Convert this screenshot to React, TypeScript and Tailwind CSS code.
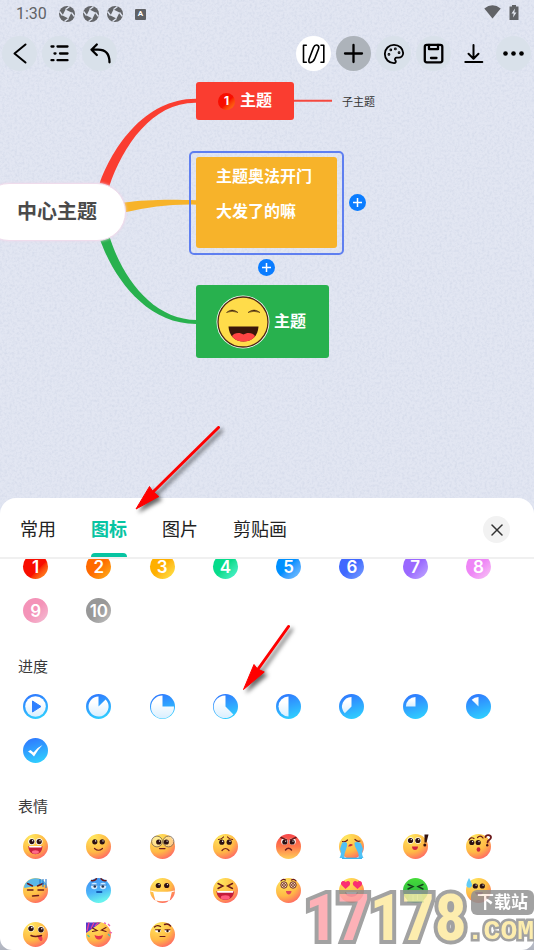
import { useState } from 'react'
import type { ReactNode } from 'react'
import { Palette, X } from 'lucide-react'

const tabs = ['常用', '图标', '图片', '剪贴画']

const numbers = [
  { label: '1', bg: 'bg-linear-135 from-[#f80d00] from-60% to-[#ff9a2a]' },
  { label: '2', bg: 'bg-linear-135 from-[#ff6a00] from-50% to-[#ffb31a]' },
  { label: '3', bg: 'bg-linear-135 from-[#ffb000] from-50% to-[#ffe94a]' },
  { label: '4', bg: 'bg-linear-135 from-[#06dc8b] from-50% to-[#4ff5d6]' },
  { label: '5', bg: 'bg-linear-135 from-[#0090ff] from-50% to-[#7cc4ff]' },
  { label: '6', bg: 'bg-linear-135 from-[#4068ff] from-50% to-[#7fa0ff]' },
  { label: '7', bg: 'bg-linear-135 from-[#9a68ff] from-50% to-[#c3aaff]' },
  { label: '8', bg: 'bg-linear-135 from-[#ee86f6] from-50% to-[#f8c6f4]' },
  { label: '9', bg: 'bg-linear-135 from-[#f493b8] from-50% to-[#f3c0d6]' },
  { label: '10', bg: 'bg-linear-135 from-[#989898] from-50% to-[#c2c2c2]' },
]

// white sector left on the blue disc
const progress = [
  { name: '12%', d: 'M12.5 12.5L19.6 5.4A10 10 0 1 1 12.5 2.5Z' },
  { name: '25%', d: 'M12.5 12.5H24A11.5 11.5 0 1 1 12.5 1.5Z' },
  { name: '37%', d: 'M12.5 12.5L20.4 20.4A11.3 11.3 0 1 1 12.5 1.5Z' },
  { name: '50%', d: 'M12.5 2.5V22.5A10 10 0 0 1 12.5 2.5Z' },
  { name: '62%', d: 'M12.5 12.5L5.8 19.2A9.6 9.6 0 0 1 12.5 2.9Z' },
  { name: '75%', d: 'M12.5 12.5H2.9A9.6 9.6 0 0 1 12.5 2.9Z' },
  { name: '87%', d: 'M12.5 12.5L5.7 5.7A9.6 9.6 0 0 1 12.5 2.9Z' },
]

function Eyes({ x = 12.5, y = 8, gap = 3.7 }: { x?: number; y?: number; gap?: number }) {
  return (
    <>
      {[x - gap, x + gap].map(cx => (
        <g key={cx}>
          <circle cx={cx} cy={y} r="2.6" fill="#2b1012" />
          <circle cx={cx + 0.8} cy={y - 0.9} r="0.7" fill="#fff" />
        </g>
      ))}
    </>
  )
}

const line = { fill: 'none', stroke: '#6b1a1c', strokeWidth: 1.2, strokeLinecap: 'round' as const }

const emojis: { name: string; face?: string; art: ReactNode }[] = [
  {
    name: '大笑',
    art: (
      <>
        <circle cx="8.6" cy="7.6" r="3.4" fill="#fff" />
        <circle cx="16.2" cy="7.6" r="3.4" fill="#fff" />
        <Eyes x={12.5} y={7.6} />
        <path d="M5.4 12H19.4C19.4 17.5 16.5 20.2 12.4 20.2S5.4 17.5 5.4 12Z" fill="#c81e3c" />
        <path d="M6 12H18.8L18.4 13.6H6.4Z" fill="#fff" />
        <ellipse cx="12.4" cy="18" rx="3.5" ry="1.8" fill="#ff6a88" />
      </>
    ),
  },
  {
    name: '微笑',
    art: (
      <>
        <Eyes y={7.8} />
        <path d="M8.5 14.5Q12.5 18 16.5 14.5" {...line} />
      </>
    ),
  },
  {
    name: '眼镜',
    art: (
      <>
        <circle cx="7" cy="7.5" r="5.4" fill="#fff" fillOpacity=".35" stroke="#75604a" strokeWidth=".8" />
        <circle cx="18.5" cy="7.5" r="5.4" fill="#fff" fillOpacity=".35" stroke="#75604a" strokeWidth=".8" />
        <Eyes y={8} gap={3.8} />
        <path d="M9.5 14.6H15" {...line} />
      </>
    ),
  },
  {
    name: '难过',
    art: (
      <>
        <Eyes y={8.2} />
        <path d="M5.5 5.5Q8.5 5.5 10.5 3M19.5 5.5Q16.5 5.5 14.5 3M9 16.5Q12.5 12.5 16 16.5" {...line} />
      </>
    ),
  },
  {
    name: '愤怒',
    face: 'url(#face-red)',
    art: (
      <>
        <circle cx="8.5" cy="7.5" r="3.3" fill="#fff" />
        <circle cx="16.5" cy="7.5" r="3.3" fill="#fff" />
        <Eyes y={8} />
        <path d="M5 3.5L10.8 6M20 3.5L14.2 6M9.5 16Q12.5 12.5 15.5 16" {...line} strokeWidth={1.5} />
      </>
    ),
  },
  {
    name: '大哭',
    art: (
      <>
        <path d="M3.5 7.5Q6 8.5 8.5 6M21 7Q18.500 8 16 5.5" {...line} />
        <path d="M3 9Q5.5 7 8 9C9 14 4.5 18 5.5 24H.5Q3 20 1 15Z" fill="#4fc1f5" />
        <path d="M15.5 8.5Q19.5 7 22 9.5L24 15Q22 20 24.5 24H19.5C21 18 15 14 15.5 8.5Z" fill="#4fc1f5" />
        <path d="M9 12.5Q11 8.5 14 11Q12 12.5 9 12.5Z" fill="#c4253c" />
        <path d="M3 24.3H23" stroke="#38b6f1" strokeWidth="1.4" />
      </>
    ),
  },
  {
    name: '惊讶',
    art: (
      <>
        <circle cx="7.5" cy="6.5" r="3.2" fill="#fff" />
        <circle cx="15" cy="6.5" r="3.2" fill="#fff" />
        <Eyes x={11.2} y={6.5} />
        <path d="M9 12.5H15C15 17.2 9 17.2 9 12.5Z" fill="#d3243f" />
        <path d="M21.500 .5H25.5L23.5 8.5H21.5Z" fill="#33120f" />
        <circle cx="21.8" cy="11" r="1.5" fill="#33120f" />
      </>
    ),
  },
  {
    name: '疑问',
    art: (
      <>
        <Eyes x={9} y={8.5} gap={3.2} />
        <path d="M3 6Q5 2.5 8 4.5M11.5 3.5Q14.5 .5 17 4" {...line} />
        <ellipse cx="12.5" cy="15.5" rx="1.9" ry="2.2" fill="#c4253c" />
        <path d="M19.5 3C20 .5 25 .5 25 3.5C25 6 21.5 5.5 21.5 8.5" {...line} strokeWidth={1.8} />
        <circle cx="21.2" cy="11.2" r="1.2" fill="#4b1513" />
      </>
    ),
  },
  {
    name: '无语',
    art: (
      <>
        <path d="M1.2 8A12.5 12.5 0 0 1 23.5 6.5Q12 8 1.2 10Z" fill="#59b8ea" />
        <path d="M4.5 5.5L9.5 8M20 5.5L14.5 8M4.5 12H10M15 12H20.5M9.5 18L15.5 17.5" {...line} strokeWidth={1.4} />
        <path d="M17 1V6M20 1V9M23 1V10" stroke="#2378d2" strokeWidth="1.1" />
      </>
    ),
  },
  {
    name: '沮丧',
    face: 'url(#face-blue)',
    art: (
      <>
        <path d="M5.5 2.5Q8 3.5 10.5 .8M20 2.5Q17.5 3.5 15 .8" {...line} strokeWidth={1.5} />
        <circle cx="8.2" cy="8" r="3.2" fill="#d5ecff" />
        <circle cx="17" cy="8" r="3.2" fill="#d5ecff" />
        <path d="M4.5 7H11.5M13.5 7H20.5" stroke="#1872cb" strokeWidth="1.2" />
        <circle cx="8.8" cy="8.5" r="1.3" fill="#28334f" />
        <circle cx="16.8" cy="8.5" r="1.3" fill="#28334f" />
        <path d="M11 14H15.5" stroke="#145fb7" strokeWidth="1.8" strokeLinecap="round" />
      </>
    ),
  },
  {
    name: '口罩',
    art: (
      <>
        <Eyes y={7.5} gap={4.2} />
        <path d="M3 13.2Q12.5 14.5 22 13.2L19.8 22.3Q12.5 24 5.2 22.3Z" fill="#fff" />
        <path d="M.3 13L3.5 13.6M24.7 13L21.500 13.6M5.5 21.800L7 24M19.5 21.8L18 24" stroke="#fff" strokeWidth="1" />
      </>
    ),
  },
  {
    name: '爆笑',
    art: (
      <>
        <path d="M5 5.5L10 8L5 10.5M19.5 5.5L14.5 8L19.5 10.5" {...line} strokeWidth={1.4} />
        <path d="M3.5 13H21C21 18.5 17 22 12.3 22S3.5 18.5 3.5 13Z" fill="#c31b3a" />
        <path d="M4 13H20.5L20 14.7H4.5Z" fill="#fff" />
        <ellipse cx="12.3" cy="19.5" rx="4.5" ry="2.2" fill="#ff5b7c" />
      </>
    ),
  },
  {
    name: '眩晕',
    art: (
      <>
        {[8, 17].map(cx => (
          <g key={cx}>
            <circle cx={cx} cy="7" r="3.2" fill="#fbe3c0" stroke="#6d2a22" strokeWidth="1" />
            <circle cx={cx} cy="7" r="1.4" fill="none" stroke="#6d2a22" strokeWidth="1" />
          </g>
        ))}
        <path d="M5 2.8Q7 .5 9.5 2M20 2.8Q18 .5 15.5 2" {...line} />
        <path d="M10 13H15.500C15.5 17.5 10 17.5 10 13Z" fill="#e1435a" />
      </>
    ),
  },
  {
    name: '爱心',
    art: (
      <>
        <path d="M6.5 11L2.5 7C.5 4 4.5 1.5 6.8 4C9.5 1.5 12.5 4.5 10.5 7.5Z" fill="#fb2f72" />
        <path d="M18.5 11L14.5 7.5C12.5 4.5 16 1.5 18.3 4C21 1.5 24.5 4.5 22.5 7.5Z" fill="#fb2f72" />
        <path d="M6 14H19C18 20.5 7 20.5 6 14Z" fill="#ac2024" />
        <path d="M7 14H18L17 16H8Z" fill="#fff" />
      </>
    ),
  },
  {
    name: '呕吐',
    face: 'url(#face-green)',
    art: (
      <>
        <path d="M5 6.5L10 8.5L5 11M20 6.5L15 8.5L20 11" {...line} stroke="#163f1d" strokeWidth={1.4} />
        <path d="M7 14Q12.5 12 18 14L21 24.5H4Z" fill="#22c08b" />
        <path d="M10 17V23M14.5 16.5V22" stroke="#6cebc0" strokeWidth="1" />
      </>
    ),
  },
  {
    name: '流汗',
    art: (
      <>
        <Eyes x={12.8} y={8} gap={3.5} />
        <path d="M9 14H17C16.5 18.5 9.5 18.5 9 14Z" fill="#b92032" />
        <path d="M3 0Q.2 5 .5 7.5A2.8 2.8 0 0 0 6 7.5Q6 5 3 0Z" fill="#63ccf6" />
      </>
    ),
  },
  {
    name: '鬼脸',
    art: (
      <>
        <circle cx="8" cy="6.5" r="3.2" fill="#fff" />
        <circle cx="18" cy="7.5" r="3.2" fill="#fff" />
        <circle cx="8" cy="6.6" r="2.7" fill="#2b1012" />
        <circle cx="18" cy="7.8" r="2.7" fill="#2b1012" />
        <circle cx="8.800" cy="5.6" r=".8" fill="#fff" />
        <circle cx="18.8" cy="6.8" r=".8" fill="#fff" />
        <path d="M14 13.5L18.5 14C20.5 17 19 19.5 17.5 19Q15.500 17.5 14 13.5Z" fill="#ee3e55" />
        <path d="M8 13.5Q12 15.5 18.5 13.5" {...line} strokeWidth={1.5} />
      </>
    ),
  },
  {
    name: '派对',
    art: (
      <>
        <path d="M0 .5H15L0 11Z" fill="#5438c8" />
        <path d="M3 .5L1 9M8 .5L5 6.5M12.5 .5L9 4" stroke="#e9409a" strokeWidth="1.3" />
        <path d="M6.5 6L11 8.5L6.5 9.5M20 5.5L15.5 8L20 9.5" {...line} />
        <path d="M8.5 13Q12.5 15 17 13Q16 17.8 12.7 17.5Q9.5 17.5 8.5 13Z" fill="#e5354f" />
        <path d="M22 2L24 4M23.5 10L26 11M18 .8L20 1.5" stroke="#ec58b0" strokeWidth="1.3" />
        <path d="M1.5 13L3.5 15M22 12L24 14" stroke="#45c8b1" strokeWidth="1.3" />
      </>
    ),
  },
  {
    name: '怀疑',
    art: (
      <>
        <path d="M4.5 5Q7 2.5 10.5 4.5M14.5 2.5Q18 .8 20.5 4" {...line} strokeWidth={1.4} />
        <path d="M5 8H11A3 2.5 0 0 1 5 8ZM14.5 8H20.5A3 2.5 0 0 1 14.5 8Z" fill="#fff" />
        <path d="M5.500 7.8H10.5M15 7.8H20M10 14.5H15" {...line} strokeWidth={1} />
        <circle cx="9" cy="9" r="1.2" fill="#2b1012" />
        <circle cx="17.5" cy="9" r="1.2" fill="#2b1012" />
      </>
    ),
  },
]

function Defs() {
  return (
    <svg className="absolute size-0" aria-hidden="true">
      <defs>
        <radialGradient id="face" cx=".3" cy=".15" r=".95">
          <stop offset="0" stopColor="#ffe75e" />
          <stop offset=".6" stopColor="#ffba45" />
          <stop offset="1" stopColor="#ff6068" />
        </radialGradient>
        <linearGradient id="face-red" x1="0" y1="0" x2="0" y2="1">
          <stop offset="0" stopColor="#f8464b" />
          <stop offset=".5" stopColor="#ff784b" />
          <stop offset="1" stopColor="#ffcf5a" />
        </linearGradient>
        <linearGradient id="face-blue" x1="0" y1="0" x2=".3" y2="1">
          <stop offset="0" stopColor="#3f8ef2" />
          <stop offset=".6" stopColor="#4cb4fa" />
          <stop offset="1" stopColor="#68f2ee" />
        </linearGradient>
        <linearGradient id="face-green" x1="0" y1="0" x2="0" y2="1">
          <stop offset="0" stopColor="#46dc39" />
          <stop offset="1" stopColor="#1faa45" />
        </linearGradient>
        <linearGradient id="disc" x1=".3" y1="0" x2=".6" y2="1">
          <stop offset="0" stopColor="#2f78ff" />
          <stop offset="1" stopColor="#2fcfff" />
        </linearGradient>
        <linearGradient id="pale" x1="0" y1="0" x2="0" y2="1">
          <stop offset=".3" stopColor="#fff" />
          <stop offset="1" stopColor="#d9efff" />
        </linearGradient>
      </defs>
    </svg>
  )
}

function PaperTexture() {
  return (
    <svg className="pointer-events-none absolute inset-0 size-full" aria-hidden="true">
      <filter id="grain" x="0" y="0" width="100%" height="100%">
        <feTurbulence type="fractalNoise" baseFrequency=".4" numOctaves="3" seed="4" />
        <feColorMatrix values="0 0 0 0 .6  0 0 0 0 .65  0 0 0 0 .78  2 0 0 0 -.8" />
      </filter>
      <rect width="100%" height="100%" filter="url(#grain)" opacity=".55" />
    </svg>
  )
}

function Wheel() {
  return (
    <svg viewBox="0 0 16 16" className="size-4">
      <circle cx="8" cy="8" r="8" fill="#636569" />
      <path d="M6.500 3.5L12.5 6.5L9.5 12.5L3.500 9.5Z" fill="#dfe4f0" />
      <path d="M6.5 3.5L10.500 .5M12.5 6.5L15.5 10.5M9.5 12.5L5.5 15.5M3.5 9.5L.5 5.5" stroke="#dfe4f0" strokeWidth="1.4" />
    </svg>
  )
}

function StatusBar() {
  return (
    <div className="flex h-7 items-center justify-between pl-4 pr-[15px] text-[#606266]">
      <div className="flex items-center gap-2">
        <span className="mr-1 font-[Roboto,sans-serif] text-base leading-7">1:30</span>
        <Wheel />
        <Wheel />
        <Wheel />
        <span className="ml-1 flex size-[11px] items-center justify-center rounded-[1px] bg-[#5f6165] font-[Roboto,sans-serif] text-[8px] font-bold text-white">
          A
        </span>
      </div>
      <div className="flex items-center gap-2 pb-1">
        <svg viewBox="0 0 17 14" className="h-3.5 w-[17px]">
          <path d="M.3 3.5Q8.5-3 16.7 3.5L8.5 13.5Z" fill="currentColor" />
        </svg>
        <svg viewBox="0 0 10 15" className="h-[15px] w-2.5">
          <path d="M3 0H7V1.5H9.5V15H.5V1.5H3Z" fill="currentColor" />
          <path d="M6 3.5L2.5 8.5H4.7L4 12.5L7.5 7.5H5.3Z" fill="#e4e8f1" />
        </svg>
      </div>
    </div>
  )
}

function ToolButton({ label, tone = 'bg-[#d9e1ea]', children }: { label: string; tone?: string; children: ReactNode }) {
  return (
    <button type="button" aria-label={label} className={`flex size-[35px] items-center justify-center rounded-full text-black ${tone}`}>
      {children}
    </button>
  )
}

function Glyph({ children, width = 2 }: { children: ReactNode; width?: number }) {
  return (
    <svg
      viewBox="0 0 35 35"
      className="size-[35px]"
      fill="none"
      stroke="currentColor"
      strokeWidth={width}
      strokeLinecap="round"
      strokeLinejoin="round"
    >
      {children}
    </svg>
  )
}

function Toolbar() {
  return (
    <div className="flex justify-between pl-0.5 pr-[3px] pt-2">
      <div className="flex gap-[5px]">
        <ToolButton label="返回">
          <Glyph>
            <path d="M23.5 8.5L12.5 17.5L23.5 26.5" />
          </Glyph>
        </ToolButton>
        <ToolButton label="大纲">
          <Glyph width={2.3}>
            <path d="M9.5 10.5H11.5M15.5 10.5H25.5M12.5 17.5H13.5M18 17.5H25.5M9.5 24.2H11.5M15.5 24.2H25.5" />
          </Glyph>
        </ToolButton>
        <ToolButton label="撤销">
          <Glyph width={2.3}>
            <path d="M14.8 8.5L9.5 13.7L14.8 19M9.5 13.7H16C24 13.7 27.5 18 27.5 26.3" />
          </Glyph>
        </ToolButton>
      </div>
      <div className="flex gap-[5px]">
        <ToolButton label="手写" tone="bg-white">
          <Glyph width={1.6}>
            <path d="M10.3 9.2H7.5V26.3H10.3M25 9.2H27.8V26.3H25" />
            <path d="M17.5 11.5C18.3 9.5 20 8.8 21.5 9.2C23 9.8 23 11.5 22.5 13L18.8 22.5C17.8 25 16 26.5 14 26.8C12.6 26.5 12.6 24.5 13.2 22.8Z" />
          </Glyph>
        </ToolButton>
        <ToolButton label="添加" tone="bg-[#adb3ba]">
          <Glyph width={2.3}>
            <path d="M17.5 9V26M9 17.5H26" />
          </Glyph>
        </ToolButton>
        <ToolButton label="样式">
          <Palette size={22} strokeWidth={2} />
        </ToolButton>
        <ToolButton label="保存">
          <Glyph width={2.3}>
            <rect x="8.8" y="8.8" width="17.5" height="17.5" rx="2" />
            <path d="M13 9V13.2H22V9M15 22H20.5" />
          </Glyph>
        </ToolButton>
        <ToolButton label="下载" tone="bg-transparent">
          <Glyph>
            <path d="M17.5 9V22.5M12.5 17.8L17.5 22.8L22.5 17.8M9.3 26H26.3" />
          </Glyph>
        </ToolButton>
        <ToolButton label="更多">
          <svg viewBox="0 0 35 35" className="size-[35px]" fill="currentColor">
            <circle cx="9.5" cy="17.5" r="2.3" />
            <circle cx="17.5" cy="17.5" r="2.3" />
            <circle cx="25.5" cy="17.5" r="2.3" />
          </svg>
        </ToolButton>
      </div>
    </div>
  )
}

function AddNode({ label, place }: { label: string; place: string }) {
  return (
    <button type="button" aria-label={label} className={`absolute size-[17px] rounded-full bg-[#0a7cff] ${place}`}>
      <svg viewBox="0 0 17 17" className="size-[17px]" stroke="#fff" strokeWidth="1.5">
        <path d="M8.5 4V13M4 8.5H13" />
      </svg>
    </button>
  )
}

function GrinFace() {
  return (
    <svg viewBox="0 0 54 54" className="size-[54px]">
      <circle cx="27" cy="27" r="26.5" fill="#fff" />
      <circle cx="27" cy="27" r="25" fill="#ffdc4a" stroke="#4d2a12" strokeWidth="1.3" />
      <path d="M10.5 17.5Q16 12.5 22 17.5Q16 15 10.5 17.5ZM32 17.5Q38 12.5 44 17.5Q38 15 32 17.5Z" fill="#3d1f0e" stroke="#3d1f0e" strokeWidth=".5" />
      <path d="M12.5 31.5H42.5C42 41 36 46.5 27.5 46.5S13 41 12.5 31.5Z" fill="#3a160a" />
      <path d="M16 41C18 37.5 24 37 27.5 39.5C31 37 37 37.5 39 41C36.5 45 32.5 46.5 27.5 46.5S18.500 45 16 41Z" fill="#ff4543" />
    </svg>
  )
}

function MindMap() {
  return (
    <main className="relative min-h-[427px] flex-1 overflow-hidden">
      <svg className="absolute left-0 top-0 h-72 w-[340px]" viewBox="0 71 340 288" aria-hidden="true">
        <path d="M99.5 184C112 148 145 98 197 98.800L197 102.7C153 101.5 123 145 109 187Z" fill="#fa3d30" />
        <path d="M124 202.5C145 200 165 199 197 200.3V204.7C170 204 150 207 124 212.5Z" fill="#f7b32a" />
        <path d="M99.5 238C112 275 145 324.500 197 324V320C153 320 122 278 109 235Z" fill="#28b14e" />
        <path d="M293 100.8H332" stroke="#f5483f" strokeWidth="2" />
      </svg>

      <div className="absolute -left-5 top-28 flex h-[58px] w-[146px] items-center rounded-full border border-[#efdcec] bg-white pl-9 text-xl font-bold text-[#4a4a4a] shadow-[0_0_3px_#ecd8ea]">
        中心主题
      </div>

      <div className="absolute left-[196px] top-[11px] flex h-[38px] w-[98px] items-center gap-[5px] rounded-[3px] bg-[#fa3d30] pl-[22px] text-base font-bold text-white">
        <span className="flex size-[17px] items-center justify-center rounded-full bg-linear-135 from-[#f80d00] from-55% to-[#ff7a1a] font-[Inter,sans-serif] text-xs">
          1
        </span>
        主题
      </div>
      <div className="absolute left-[342px] top-[22px] text-[11px] leading-[18px] text-[#333]">子主题</div>

      <div className="absolute left-[189px] top-20 rounded-[5px] border-2 border-[#5f7ff0] p-[5px] pt-1">
        <p className="h-[91px] w-[141px] whitespace-pre-line rounded-[3px] bg-[#f7b32a] pl-5 pt-0.5 text-base leading-[35px] font-bold text-white">
          {'主题奥法开门\n大发了的嘛'}
        </p>
      </div>
      <AddNode label="添加子主题" place="left-[349px] top-[123px]" />
      <AddNode label="添加同级主题" place="left-[258px] top-[188px]" />

      <div className="absolute left-[196px] top-[214px] flex h-[73px] w-[133px] items-center gap-1 rounded-[3px] bg-[#28b14e] pl-5 text-base font-bold text-white">
        <GrinFace />
        主题
      </div>
    </main>
  )
}

function IconGrid({ children }: { children: ReactNode }) {
  return <div className="grid grid-cols-8 justify-items-center gap-y-[19px] pl-1 pr-6">{children}</div>
}

function IconButton({ label, children }: { label: string; children: ReactNode }) {
  return (
    <button type="button" aria-label={label} className="size-[25px]">
      {children}
    </button>
  )
}

function SectionTitle({ children }: { children: ReactNode }) {
  return <h2 className="pb-[15px] pl-[18px] pt-8 text-[15px] leading-6 text-[#3a3a3a]">{children}</h2>
}

function IconPanel() {
  const [active, setActive] = useState('图标')

  return (
    <section className="relative overflow-hidden rounded-t-2xl rounded-b-xl bg-white">
      <header className="flex h-[61px] items-center justify-between border-b-2 border-[#f0f0f0] pl-5 pr-6">
        <nav className="flex gap-[35px] self-stretch">
          {tabs.map(tab => (
            <button
              key={tab}
              type="button"
              onClick={() => setActive(tab)}
              className={`relative pt-1 text-lg ${tab === active ? 'font-bold text-[#07c4a2]' : 'text-[#222]'}`}
            >
              {tab}
              {tab === active && <span className="absolute inset-x-0 bottom-0 h-1 rounded-t-full bg-[#07c4a2]" />}
            </button>
          ))}
        </nav>
        <button type="button" aria-label="关闭" className="mt-1 flex size-[27px] items-center justify-center rounded-full bg-[#f2f2f2] text-[#333]">
          <X size={20} strokeWidth={1.8} />
        </button>
      </header>

      <div className="overflow-hidden pb-[3px]">
        <div className="-mt-[5px]">
          <IconGrid>
            {numbers.map(({ label, bg }) => (
              <button
                key={label}
                type="button"
                className={`flex size-[25px] items-center justify-center rounded-full pt-0.5 font-[Inter,sans-serif] text-[17px] leading-[17px] font-semibold text-white ${bg}`}
              >
                {label}
              </button>
            ))}
          </IconGrid>
        </div>

        <SectionTitle>进度</SectionTitle>
        <IconGrid>
          <IconButton label="开始">
            <svg viewBox="0 0 25 25">
              <circle cx="12.5" cy="12.5" r="12.5" fill="url(#disc)" />
              <circle cx="12.5" cy="12.5" r="10.3" fill="url(#pale)" />
              <path d="M9.5 7L18 12.5L9.5 18Z" fill="#2f80ff" stroke="#2f80ff" strokeLinejoin="round" />
            </svg>
          </IconButton>
          {progress.map(({ name, d }) => (
            <IconButton key={name} label={name}>
              <svg viewBox="0 0 25 25">
                <circle cx="12.5" cy="12.5" r="12.5" fill="url(#disc)" />
                <path d={d} fill="url(#pale)" />
              </svg>
            </IconButton>
          ))}
          <IconButton label="完成">
            <svg viewBox="0 0 25 25">
              <circle cx="12.5" cy="12.5" r="12.5" fill="url(#disc)" />
              <path d="M5 13.5L7.5 12L10.5 14.5Q14 9.5 19.5 7Q14.5 12 11 18.5Q8.5 15.5 5 13.5Z" fill="#fff" />
            </svg>
          </IconButton>
        </IconGrid>

        <SectionTitle>表情</SectionTitle>
        <IconGrid>
          {emojis.map(({ name, face = 'url(#face)', art }) => (
            <IconButton key={name} label={name}>
              <svg viewBox="0 0 25 25" className="overflow-visible">
                <circle cx="12.5" cy="12.5" r="12.5" fill={face} />
                {art}
              </svg>
            </IconButton>
          ))}
        </IconGrid>
      </div>
    </section>
  )
}

function Arrows() {
  return (
    <svg className="pointer-events-none absolute left-0 top-0 h-[720px] w-80 overflow-visible" viewBox="0 0 320 720" aria-hidden="true">
      <g fill="#fe0000" stroke="#fe0000" className="drop-shadow-[3px_3px_2px_rgba(0,0,0,0.6)]">
        <path d="M218.5 427.5L152 493" strokeWidth="3" strokeLinecap="round" />
        <path d="M136 509L149.500 486.500L152.5 491L158.800 496.500Z" strokeWidth="1" />
        <path d="M288.5 626.5L256 672" strokeWidth="3" strokeLinecap="round" />
        <path d="M243.5 689.5L254 664.5L257.5 669L264.3 672Z" strokeWidth="1" />
      </g>
    </svg>
  )
}

function SiteMark() {
  return (
    <div className="pointer-events-none absolute bottom-0 right-0 flex h-[62px] items-start font-bold opacity-85">
      <span className="font-['Liberation_Sans_Narrow','Roboto_Condensed',sans-serif] text-[64px] leading-[62px] text-[#fdeaa0] [-webkit-text-stroke:8px_#929292] [paint-order:stroke_fill]">
        <span className="text-[#fda4ab]">17</span>178
      </span>
      <span className="flex flex-col items-end pt-0.5">
        <span className="rounded-md bg-[#929292] px-1.5 text-[17px] leading-[25px] text-white">下载站</span>
        <span className="font-['Liberation_Mono',monospace] text-[28px] leading-[34px] text-[#fdeaa0] [-webkit-text-stroke:5px_#929292] [paint-order:stroke_fill]">
          .COM
        </span>
      </span>
    </div>
  )
}

export default function App() {
  return (
    <div className="relative flex min-h-screen flex-col overflow-hidden bg-[#e2e6f2] font-['Liberation_Sans','Noto_Sans_CJK_SC',sans-serif]">
      <Defs />
      <PaperTexture />
      <div className="relative">
        <StatusBar />
        <Toolbar />
      </div>
      <MindMap />
      <div className="relative bg-linear-to-b from-transparent from-90% to-[#b0b4bf]">
        <IconPanel />
      </div>
      <Arrows />
      <SiteMark />
    </div>
  )
}
